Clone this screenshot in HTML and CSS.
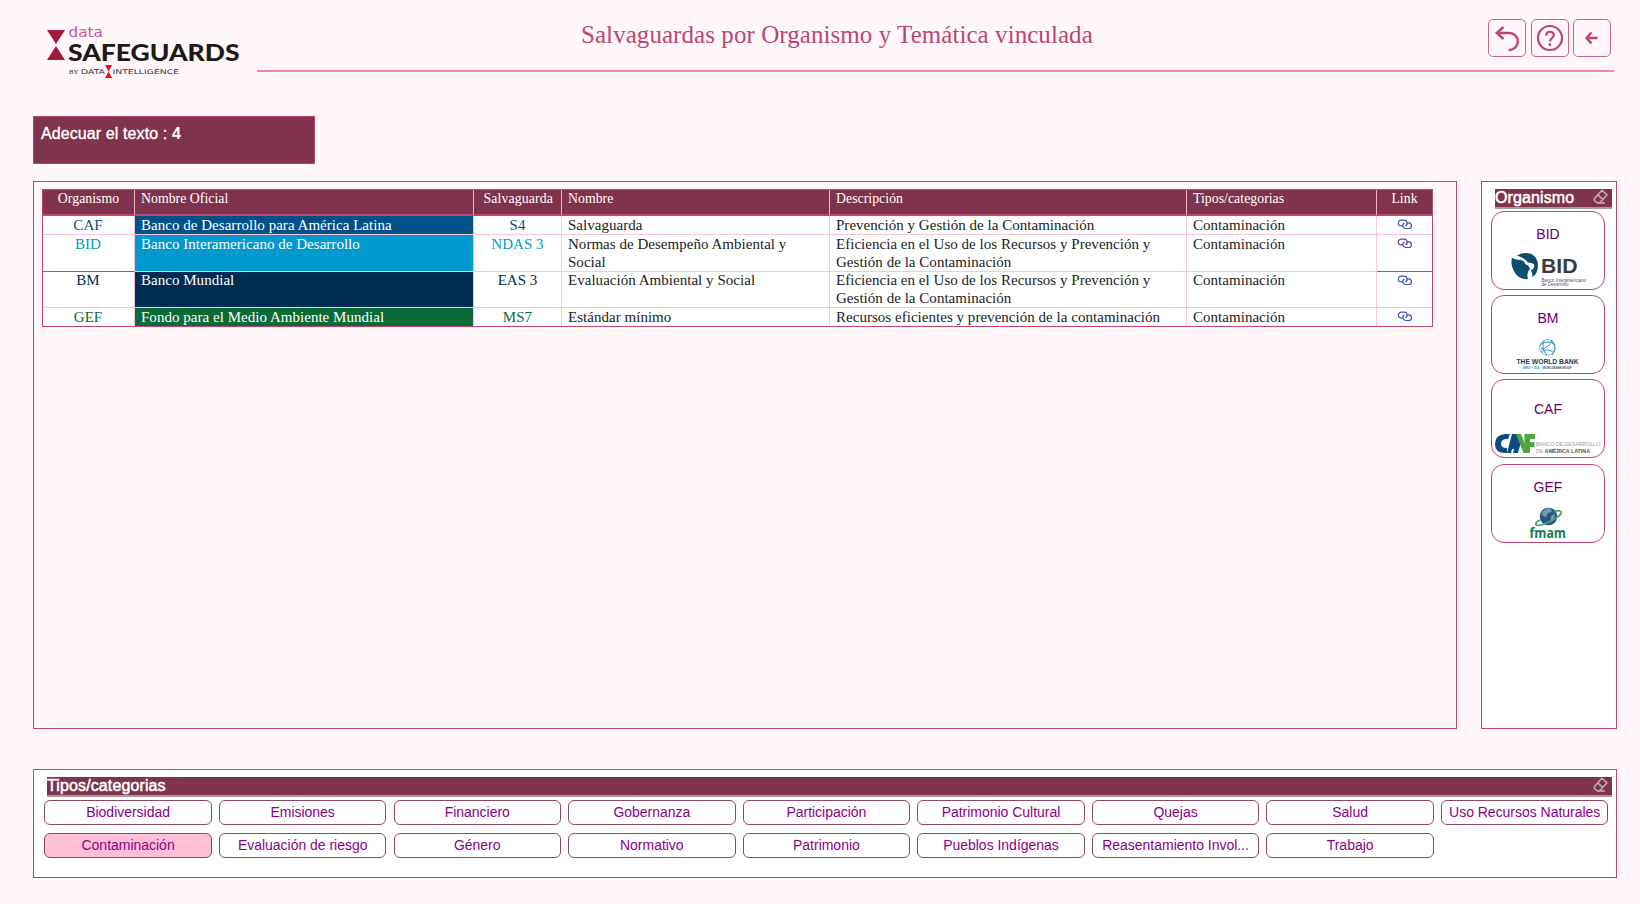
FILE: index.html
```html
<!DOCTYPE html>
<html lang="es">
<head>
<meta charset="utf-8">
<title>Salvaguardas por Organismo y Temática vinculada</title>
<link rel="stylesheet" href="styles.css">
</head>
<body>
<svg class="sprite" aria-hidden="true">
  <symbol id="eraser" viewBox="0 0 16 16"><path d="M1.5 9.5 9 1.2 14 5.8 6.8 13.8 4 13.8 1.2 11.2ZM4.800 5.900 9.800 10.400M4 14h8" fill="none" stroke="#c3aeb7" stroke-width="1.5" stroke-linejoin="round"/></symbol>
  <symbol id="link" viewBox="0 0 16 12"><path d="M5.500 7.900H4.500A3.200 2.900 0 0 1 4.500 2.100H7.300A2.900 2.900 0 0 1 8.300 7.700M10.500 4.900H11.700A2.700 2.800 0 0 1 11.700 10.500H8.700A2.900 2.900 0 0 1 7.500 5" fill="none" stroke="currentColor" stroke-width="1.2"/></symbol>
</svg>
<header class="top">
  <svg class="logo" width="200" height="60" viewBox="0 0 200 60">
    <path d="M0 5h18l-9 14zM0 35h18L9 21z" fill="#a01a3a"/>
    <text class="logo-data" x="21.500" y="12.300" textLength="34.500" lengthAdjust="spacingAndGlyphs">data</text>
    <text class="logo-name" x="21" y="35.700" textLength="171.500" lengthAdjust="spacingAndGlyphs">SAFEGUARDS</text>
    <text class="logo-by" x="22" y="48.700" textLength="9.500" lengthAdjust="spacingAndGlyphs">BY</text>
    <text class="logo-sub" x="34" y="48.700" textLength="24" lengthAdjust="spacingAndGlyphs">DATA</text>
    <path d="M58 40h7l-3.500 6.500zM58 53h7l-3.500-6.500z" fill="#e8101c"/>
    <text class="logo-sub" x="65.500" y="48.700" textLength="66.500" lengthAdjust="spacingAndGlyphs">INTELLIGENCE</text>
  </svg>
  <div class="titlebar">
    <h1>Salvaguardas por Organismo y Temática vinculada</h1>
    <nav>
      <button aria-label="Deshacer"><svg width="36" height="36" viewBox="0 0 36 36"><path d="M14.500 7 7.700 13 14.500 19M8 13H20.500A8.300 8.500 0 0 1 20.500 30H19.500" fill="none" stroke="#bd476c" stroke-width="2.400"/></svg></button>
      <button aria-label="Ayuda"><svg width="36" height="36" viewBox="0 0 36 36"><g fill="none" stroke="#bd476c" stroke-width="2.200"><circle cx="18" cy="18" r="12"/><path d="M14.200 15.700c0-5.300 7.600-5 7.600-.6 0 3.300-3.900 3.300-3.900 6.300M17.900 23.300v2.600"/></g></svg></button>
      <button aria-label="Volver"><svg width="36" height="36" viewBox="0 0 36 36"><path d="M17.500 12.500 12.500 18 17.500 23.500M12.800 18h10.700" fill="none" stroke="#bd476c" stroke-width="2.400"/></svg></button>
    </nav>
  </div>
</header>

<div class="summary">Adecuar el texto : <b>4</b></div>

<main>
  <section class="results">
    <table>
      <colgroup><col class="c1"><col class="c2"><col class="c3"><col class="c4"><col class="c5"><col class="c6"><col class="c7"></colgroup>
      <thead><tr><th class="mid">Organismo</th><th>Nombre Oficial</th><th class="mid wide">Salvaguarda</th><th>Nombre</th><th>Descripción</th><th>Tipos/categorias</th><th class="mid">Link</th></tr></thead>
      <tbody>
        <tr class="caf"><td class="mid key">CAF</td><td class="fill">Banco de Desarrollo para América Latina</td><td class="mid key">S4</td><td>Salvaguarda</td><td>Prevención y Gestión de la Contaminación</td><td>Contaminación</td><td class="mid"><svg class="chain"><use href="#link"/></svg></td></tr>
        <tr class="bid two"><td class="mid key">BID</td><td class="fill">Banco Interamericano de Desarrollo</td><td class="mid key">NDAS 3</td><td>Normas de Desempeño Ambiental y<br>Social</td><td>Eficiencia en el Uso de los Recursos y Prevención y<br>Gestión de la Contaminación</td><td>Contaminación</td><td class="mid"><svg class="chain visited"><use href="#link"/></svg></td></tr>
        <tr class="bm two"><td class="mid key">BM</td><td class="fill">Banco Mundial</td><td class="mid key">EAS 3</td><td>Evaluación Ambiental y Social</td><td>Eficiencia en el Uso de los Recursos y Prevención y<br>Gestión de la Contaminación</td><td>Contaminación</td><td class="mid"><svg class="chain"><use href="#link"/></svg></td></tr>
        <tr class="gef"><td class="mid key">GEF</td><td class="fill">Fondo para el Medio Ambiente Mundial</td><td class="mid key">MS7</td><td>Estándar mínimo</td><td>Recursos eficientes y prevención de la contaminación</td><td>Contaminación</td><td class="mid"><svg class="chain"><use href="#link"/></svg></td></tr>
      </tbody>
    </table>
  </section>

  <aside class="orgs">
    <div class="bar"><span>Organismo</span><svg class="eraser"><use href="#eraser"/></svg></div>
    <div class="org-list">
      <button><span>BID</span>
        <svg width="113" height="77" viewBox="0 0 113 77"><path d="M20 46q4 2 9 2 4 1 4 4 4 1 5 5-4 3-2 10-8 1-13-6-5-8-3-15z" fill="#0b4e70"/><path d="M25 43.500q6-3.500 13-2 8 3 8 12 0 8-6 12 1-4-1-7 4-2 3-6-2-2-6-2-4-5-11-7z" fill="#0b4e70"/><text class="bid-name" x="49" y="61" textLength="36.500" lengthAdjust="spacingAndGlyphs">BID</text><text class="bid-sub" x="49.500" y="69.500" textLength="44.500" lengthAdjust="spacingAndGlyphs">Banco Interamericano</text><text class="bid-sub" x="49.500" y="74.200" textLength="27" lengthAdjust="spacingAndGlyphs">de Desarrollo</text></svg></button>
      <button><span>BM</span>
        <svg width="113" height="77" viewBox="0 0 113 77"><g fill="none" stroke="#2b8fc4" stroke-width="1"><circle cx="55.500" cy="51.500" r="7.800" stroke="#64b5dc"/><path d="M48 49c5-4 11-4 15 0M49 56c4-3 9-3 13 1M52 45c-2 5-1 10 3 14M59 44c4 4 5 10 1 15M49 53c6-1 9-4 11-9"/></g><text class="wb" x="24.500" y="67.500" textLength="62" lengthAdjust="spacingAndGlyphs">THE WORLD BANK</text><text class="wb-blue" x="30.500" y="72.500" textLength="17" lengthAdjust="spacingAndGlyphs">IBRD • IDA</text><text class="wb-sub" x="49.500" y="72.500" textLength="30" lengthAdjust="spacingAndGlyphs">| WORLDBANKGROUP</text></svg></button>
      <button class="low"><span>CAF</span>
        <svg width="113" height="77" viewBox="0 0 113 77"><path d="M18 54H13Q3 55 3 64t10 9h2v-5q-6 0-6-4.500T15 59h1z" fill="#0b4b83"/><path d="M15 73 20 54h6l3 8-3 11h-5l1-4h-2l-1 4z" fill="#0b4b83"/><path d="M24 54h5l3.500 9V54h5v19h-6z" fill="#4da73c"/><path d="M34 54h9v5h-5v3h4.500v5H38v6h-5z" fill="#4da73c"/><text class="caf-sub" x="44" y="65.500" textLength="64" lengthAdjust="spacingAndGlyphs">BANCO DE DESARROLLO</text><text class="caf-sub" x="44" y="72.500" textLength="54" lengthAdjust="spacingAndGlyphs">DE <tspan class="dark">AMÉRICA LATINA</tspan></text></svg></button>
      <button><span>GEF</span>
        <svg width="113" height="77" viewBox="0 0 113 77"><circle cx="56.500" cy="51.500" r="8.800" fill="#28558e"/><path d="M51 46q5-4 8-2l1 3-4 1-2 4-3-1q-2-3 0-5zM59 51l4-2-1 5-4 4z" fill="#7899a5"/><path d="M48 55c-8 4-4 7 4 4 10-3 21-11 16-13-2-1-4 0-6 1" fill="none" stroke="#46a45f" stroke-width="1.800"/><text class="fmam" x="37.500" y="72.500" textLength="36.500" lengthAdjust="spacingAndGlyphs">fmam</text></svg></button>
    </div>
  </aside>
</main>

<section class="types">
  <div class="bar"><span>Tipos/categorias</span><svg class="eraser"><use href="#eraser"/></svg></div>
  <div class="chips">
    <button>Biodiversidad</button><button>Emisiones</button><button>Financiero</button><button>Gobernanza</button><button>Participación</button><button>Patrimonio Cultural</button><button>Quejas</button><button>Salud</button><button>Uso Recursos Naturales</button>
    <button class="on">Contaminación</button><button>Evaluación de riesgo</button><button>Género</button><button>Normativo</button><button>Patrimonio</button><button>Pueblos Indígenas</button><button>Reasentamiento Invol...</button><button>Trabajo</button>
  </div>
</section>
</body>
</html>
```
FILE: styles.css
```css
* { box-sizing: border-box; }
body { margin: 0; height: 904px; padding: 0 23px 0 33px; background: #fff7fa; font-family: "Liberation Sans", Arial, sans-serif; display: flex; flex-direction: column; overflow: hidden; }
button { font: inherit; padding: 0; margin: 0; background: none; }
.sprite { display: none; }

.top { display: flex; height: 72px; flex: none; }
.logo { margin: 25px 10px 0 14px; flex: none; overflow: visible; }
.logo-data { font: 14px "DejaVu Sans", sans-serif; fill: #c755a5; }
.logo-name { font: 900 23.5px Lato, sans-serif; fill: #1b1a19; }
.logo-by { font: 7px "Liberation Serif", serif; fill: #333; }
.logo-sub { font: 6.4px "DejaVu Sans", sans-serif; fill: #333; }
.titlebar { width: 1357px; display: flex; justify-content: space-between; border-bottom: 2px solid #fa83ab; }
h1 { margin: 20px 0 0 324px; font: 25px/30px "Liberation Serif", serif; color: #bd476c; letter-spacing: .06px; white-space: nowrap; }
nav { display: flex; gap: 4px; margin: 19px 3px 0 0; }
nav button { width: 38px; height: 38px; border: 1px solid #c86488; border-radius: 5px; }
nav button:first-child { margin-right: 1px; }
nav svg { display: block; }

.summary { flex: none; width: 282px; height: 48px; margin-top: 44px; padding: 8px 7px; border: 1px solid #b8456c; background: #80334c; color: #fff; font-size: 16px; line-height: 18px; letter-spacing: .1px; -webkit-text-stroke: .35px #fff; }
.summary b { -webkit-text-stroke: 0; }

main { display: flex; gap: 24px; height: 548px; margin-top: 17px; flex: none; }
.results { width: 1424px; border: 1px solid #bd476c; padding: 7px 8px; }
table { width: 1391px; table-layout: fixed; border-collapse: separate; border-spacing: 0; border: 1px solid #bd476c; background: #fff; font: 15px/18px "Liberation Serif", serif; letter-spacing: .03px; color: #222; }
.c1 { width: 92px; } .c2 { width: 339px; } .c3 { width: 88px; } .c4 { width: 268px; } .c5 { width: 357px; } .c6 { width: 190px; } .c7 { width: 55px; }
th { height: 26px; padding: 0 0 0 6px; text-align: left; vertical-align: top; font-weight: 400; font-size: 13.8px; color: #fff; background: #80334c; border-right: 1px solid #f5afc5; border-bottom: 2px solid #bd476c; }
td { height: 19px; padding: 0 0 0 6px; vertical-align: top; border-right: 1px solid #fbc6d6; border-bottom: 1px solid #fbc6d6; white-space: nowrap; }
.two td { height: 37px; }
.bm.two td { height: 36px; line-height: 17.5px; }
th:last-child, td:last-child { border-right: 0; }
tbody tr:last-child td { height: 18px; border-bottom: 0; }
.mid { text-align: center; padding: 0; }
td.mid:first-child { padding-right: 1px; }
th.wide { letter-spacing: 0.12px; padding-right: 8px; padding-left: 0; text-align: right; }
.caf .key { color: #005187; } .caf .fill { background: #005187; }
.bid .key { color: #0099cf; } .bid .fill { background: #0099cf; }
.bm .key { color: #002e52; } .bm .fill { background: #002e52; }
.gef .key { color: #0a6b36; } .gef .fill { background: #0a6b36; }
td.fill { color: #fff; }
.bid td:first-child, .bid td:last-child { border-bottom-color: #bd476c; }
.chain { width: 16px; height: 12px; display: block; margin: 2px auto 0; color: #3b55b0; }
.chain.visited { color: #6a3ab0; }

.orgs { width: 136px; border: 1px solid #bd476c; background: #fff; padding: 7px 4px 0 9px; }
.bar { display: flex; justify-content: space-between; background: #80334c; border-bottom: 2px solid #a89aa0; color: #fff; height: 20px; font-size: 16px; line-height: 18px; letter-spacing: .12px; padding-right: 3px; -webkit-text-stroke: .5px #fff; }
.orgs .bar { margin-left: 4px; }
.eraser { width: 16px; height: 16px; -webkit-text-stroke: 0; }
.org-list { display: flex; flex-direction: column; gap: 5.2px; margin-top: 2px; }
.org-list button { position: relative; width: 114px; height: 79px; border: 1px solid #bd476c; border-radius: 13px; color: #6a006a; font-size: 14px; line-height: 16px; }
.org-list span { display: block; height: 77px; padding-top: 14px; }
.org-list .low span { padding-top: 21px; }
.org-list button svg { position: absolute; left: 0; top: 0; }
.bid-name { font: bold 21px "Liberation Sans", sans-serif; fill: #3b3a40; }
.bid-sub { font: 4.6px "Liberation Sans", sans-serif; fill: #555; }
.wb { font: bold 7px "Liberation Sans", sans-serif; fill: #173d5c; }
.wb-blue { font: bold 3.4px "Liberation Sans", sans-serif; fill: #37a0d4; }
.wb-sub { font: bold 3.2px "Liberation Sans", sans-serif; fill: #456; }
.caf-sub { font: 5.6px "Liberation Sans", sans-serif; fill: #999; }
.caf-sub .dark { font-weight: bold; fill: #555; }
.fmam { font: bold 14.5px "Open Sans", sans-serif; fill: #1b7a50; }

.types { flex: none; width: 1584px; height: 109px; margin-top: 40px; border: 1px solid #bd476c; background: #fff; padding: 7px 4px 0 10px; }
.types .bar { margin-left: 3px; }
.chips { display: grid; grid-template-columns: repeat(9, 167.4px); column-gap: 7.2px; row-gap: 8px; grid-auto-rows: 25px; margin: 3px 0 0 .4px; }
.chips button { border: 1px solid #8d4862; border-radius: 6px; color: #8b008b; font-size: 14px; line-height: 22px; white-space: nowrap; padding-bottom: 1px; letter-spacing: -.02px; }
.chips .on { background: #ffc0d5; }
```
